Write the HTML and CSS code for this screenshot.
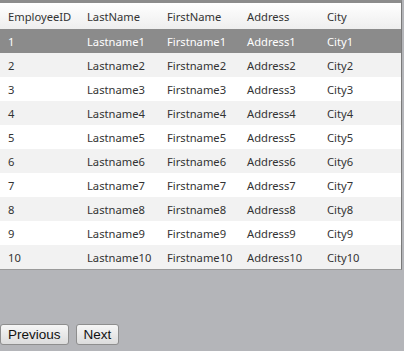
FILE: index.html
```html
<!DOCTYPE html>
<html lang="en">

<head>
    <meta charset="UTF-8">
    <title>Employees</title>
    <link rel="stylesheet" href="styles.css">
</head>

<body>
    <div class="grid">
        <div class="row header">
            <span>EmployeeID</span><span>LastName</span><span>FirstName</span><span>Address</span><span>City</span>
        </div>
        <div class="row selected">
            <span>1</span><span>Lastname1</span><span>Firstname1</span><span>Address1</span><span>City1</span>
        </div>
        <div class="row">
            <span>2</span><span>Lastname2</span><span>Firstname2</span><span>Address2</span><span>City2</span>
        </div>
        <div class="row">
            <span>3</span><span>Lastname3</span><span>Firstname3</span><span>Address3</span><span>City3</span>
        </div>
        <div class="row">
            <span>4</span><span>Lastname4</span><span>Firstname4</span><span>Address4</span><span>City4</span>
        </div>
        <div class="row">
            <span>5</span><span>Lastname5</span><span>Firstname5</span><span>Address5</span><span>City5</span>
        </div>
        <div class="row">
            <span>6</span><span>Lastname6</span><span>Firstname6</span><span>Address6</span><span>City6</span>
        </div>
        <div class="row">
            <span>7</span><span>Lastname7</span><span>Firstname7</span><span>Address7</span><span>City7</span>
        </div>
        <div class="row">
            <span>8</span><span>Lastname8</span><span>Firstname8</span><span>Address8</span><span>City8</span>
        </div>
        <div class="row">
            <span>9</span><span>Lastname9</span><span>Firstname9</span><span>Address9</span><span>City9</span>
        </div>
        <div class="row">
            <span>10</span><span>Lastname10</span><span>Firstname10</span><span>Address10</span><span>City10</span>
        </div>
    </div>

    <div class="pager">
        <button>Previous</button>
        <button>Next</button>
    </div>
</body>

</html>
```

FILE: styles.css
```css
body {
    margin: 0;
    width: 404px;
    height: 351px;
    background: #b4b5b9;
    font-family: "Noto Sans", sans-serif;
    font-size: 11.2px;
    color: #333;
}

.grid {
    width: 401px;
    border-top: 3px solid #8c8c8c;
    border-right: 1px solid #7a7a7a;
    border-bottom: 1px solid #9a9a9a;
    background: #fff;
}

.row {
    display: grid;
    grid-template-columns: 80px 80px 80px 80px 1fr;
    height: 24px;
    align-items: center;
}

.row span {
    padding-left: 7px;
}

.row span:first-child {
    padding-left: 8px;
}

.row:nth-child(odd) {
    background: #f2f2f2;
}

.row.header {
    height: 26px;
    background: linear-gradient(#ffffff, #eeeeee);
}

.row.selected {
    background: #8b8b8b;
    color: #fff;
}

.pager {
    display: flex;
    gap: 7px;
    margin-top: 54px;
}

button {
    font-family: "Liberation Sans", Arial, sans-serif;
    font-size: 13.5px;
    color: #111;
    height: 21px;
    padding: 0 7px;
    border: 1px solid #8e8e8e;
    border-radius: 3px;
    background: linear-gradient(#f6f6f6, #dcdcdc);
}
```
